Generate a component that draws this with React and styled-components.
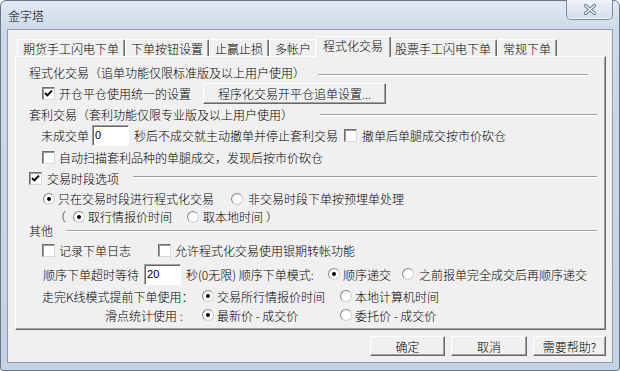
import React from 'react';
import styled, { createGlobalStyle } from 'styled-components';

const GlobalStyle = createGlobalStyle`
  html, body {
    margin: 0;
    padding: 0;
    overflow: hidden;
    background: #fff;
  }
  body {
    font-family: "Noto Sans CJK SC", "Liberation Sans", sans-serif;
    font-size: 12px;
    font-weight: 300;
    color: #000;
  }
  * {
    box-sizing: border-box;
  }
`

// ---------------- window frame ----------------

const Window = styled.div`
  width: 620px;
  height: 371px;
  display: flex;
  flex-direction: column;
  border: 1px solid #66778c;
  border-radius: 6px 6px 3px 3px;
  background: linear-gradient(#e2eaf4, #cdd9e8 28px, #c4d2e3);
  padding: 0 6px 7px;
`

const TitleBar = styled.div`
  height: 28px;
  display: flex;
  align-items: center;
  padding-left: 1px;
`

const Title = styled.span`
  font-size: 12px;
  color: #000;
`

const CloseButton = styled.div`
  margin-left: auto;
  align-self: flex-start;
  margin-top: -1px;
  width: 47px;
  height: 20px;
  display: flex;
  align-items: center;
  justify-content: center;
  border: 1px solid #7d8ba0;
  border-top: none;
  border-radius: 0 0 5px 5px;
  background: linear-gradient(#eef3f9, #d3ddea);
  box-shadow: inset 0 -1px 0 #f4f7fb;
`

const Client = styled.div`
  flex: 1;
  display: flex;
  flex-direction: column;
  border: 1px solid #8e9cb0;
  background: #f0f0f0;
  padding: 6px 6px 0 7px;
`

// ---------------- tabs ----------------

const TabStrip = styled.div`
  display: flex;
  align-items: flex-end;
  height: 20px;
  padding-left: 2px;
`

const Tab = styled.div`
  position: relative;
  z-index: ${p => (p.$active ? 2 : 1)};
  display: flex;
  align-items: center;
  height: ${p => (p.$active ? 21 : 17)}px;
  margin: 0 ${p => (p.$active ? -2 : 0)}px ${p => (p.$active ? -1 : 0)}px;
  padding: 0 ${p => (p.$active ? 7 : 5)}px ${p => (p.$active ? 4 : 0)}px;
  background: #f0f0f0;
  border-top: 1px solid #fff;
  border-left: 1px solid #fff;
  border-right: 1px solid #696969;
  border-radius: 2px 2px 0 0;
  box-shadow: inset -1px 0 0 #a0a0a0;
  white-space: nowrap;
`

const Panel = styled.div`
  height: 274px;
  display: flex;
  flex-direction: column;
  padding: 5px 0 0 13px;
  border: 1px solid;
  border-color: #fff #696969 #696969 #fff;
  box-shadow: inset -1px -1px 0 #a0a0a0;
`

// ---------------- rows and controls ----------------

const Row = styled.div`
  display: flex;
  align-items: center;
  height: ${p => p.$h}px;
  padding-left: ${p => p.$indent || 0}px;
  white-space: nowrap;
`

const Rule = styled.div`
  flex: 1;
  height: 2px;
  border-top: 1px solid #a0a0a0;
  border-bottom: 1px solid #fff;
  margin-left: ${p => p.$ml}px;
  margin-right: ${p => p.$mr}px;
  margin-top: ${p => (p.$dy > 0 ? p.$dy * 2 : 0)}px;
  margin-bottom: ${p => (p.$dy < 0 ? -p.$dy * 2 : 0)}px;
`

const Txt = styled.span`
  display: inline-block;
  flex: none;
  margin-left: ${p => p.$ml || 0}px;
  padding-left: ${p => p.$pl || 0}px;
  width: ${p => (p.$w ? `${p.$w}px` : 'auto')};
`

const Opt = styled.div`
  display: flex;
  align-items: center;
  flex: none;
  gap: ${p => p.$gap ?? 4}px;
  margin-left: ${p => p.$ml || 0}px;
  width: ${p => (p.$w ? `${p.$w}px` : 'auto')};
`

const CheckBox = styled.span`
  width: 13px;
  height: 13px;
  flex: none;
  display: flex;
  align-items: center;
  justify-content: center;
  background: #fff;
  border: 1px solid;
  border-color: #707070 #d8d8d8 #d8d8d8 #707070;
  box-shadow: inset 1px 1px 0 #9a9a9a;
`

const RadioCircle = styled.span`
  width: 12px;
  height: 12px;
  flex: none;
  display: flex;
  align-items: center;
  justify-content: center;
  border-radius: 50%;
  border: 1px solid;
  border-color: #8c8c8c #cfcfcf #cfcfcf #8c8c8c;
  background: radial-gradient(circle at 60% 60%, #fff 45%, #e2e2e2);

  &::after {
    content: '';
    display: ${p => (p.$on ? 'block' : 'none')};
    width: 4px;
    height: 4px;
    border-radius: 50%;
    background: #000;
  }
`

const Field = styled.div`
  width: ${p => p.$w}px;
  height: 21px;
  flex: none;
  margin-left: ${p => p.$ml || 0}px;
  padding-left: 2px;
  background: #fff;
  border: 1px solid;
  border-color: #a0a0a0 #fff #fff #a0a0a0;
  box-shadow: inset 1px 1px 0 #696969;
  font-family: "Liberation Sans", sans-serif;
  font-weight: 400;
  font-size: 11px;
  line-height: 18px;
`

const Button = styled.button`
  width: ${p => p.$w}px;
  height: ${p => p.$h || 20}px;
  flex: none;
  margin: 0 0 0 ${p => p.$ml || 0}px;
  padding: 0;
  font: inherit;
  color: #000;
  background: #f0f0f0;
  border: 1px solid;
  border-color: #fff #696969 #696969 #fff;
  box-shadow: inset -1px -1px 0 #a0a0a0;
  white-space: nowrap;
`

const Footer = styled.div`
  display: flex;
  justify-content: flex-end;
  gap: 6px;
  margin-top: 6px;
`

const Check = ({ on }) => (
  <CheckBox>
    {on && (
      <svg width="9" height="9" viewBox="0 0 9 9">
        <polyline points="1,4 3.3,6.4 8,1.6" fill="none" stroke="#000" strokeWidth="1.9" />
      </svg>
    )}
  </CheckBox>
)

const tabs = ['期货手工闪电下单', '下单按钮设置', '止赢止损', '多帐户', '程式化交易', '股票手工闪电下单', '常规下单']

const App = () => {
  return (
    <>
      <GlobalStyle />
      <Window>
        <TitleBar>
          <Title>金字塔</Title>
          <CloseButton>
            <svg width="12" height="11" viewBox="0 0 12 11">
              <path d="M1.5 1.5 L10.5 9.5 M10.5 1.5 L1.5 9.5" stroke="#6d7a8b" strokeWidth="3.4" strokeLinecap="round" />
              <path d="M1.5 1.5 L10.5 9.5 M10.5 1.5 L1.5 9.5" stroke="#f4f6f9" strokeWidth="1.5" strokeLinecap="round" />
            </svg>
          </CloseButton>
        </TitleBar>

        <Client>
          {/* tab headers */}
          <TabStrip>
            {tabs.map(t => (
              <Tab key={t} $active={t === '程式化交易'}>{t}</Tab>
            ))}
          </TabStrip>

          <Panel>
            <Row $h={20}>
              <Txt $w={276}>程式化交易（追单功能仅限标准版及以上用户使用）</Txt>
              <Rule $ml={13} $mr={17} $dy={3} />
            </Row>
            <Row $h={23} $indent={13}>
              <Opt>
                <Check on />
                开仓平仓使用统一的设置
              </Opt>
              <Button $w={183} $h={21} $ml={12}>程序化交易开平仓追单设置...</Button>
            </Row>

            <Row $h={19}>
              <Txt $w={264}>套利交易（套利功能仅限专业版及以上用户使用）</Txt>
              <Rule $ml={27} $mr={8} />
            </Row>
            <Row $h={22} $indent={12}>
              <Txt>未成交单</Txt>
              <Field $w={37} $ml={3}>0</Field>
              <Txt $ml={5}>秒后不成交就主动撤单并停止套利交易</Txt>
              <Opt $ml={6} $gap={5}>
                <Check />
                撤单后单腿成交按市价砍仓
              </Opt>
            </Row>
            <Row $h={22} $indent={13}>
              <Opt>
                <Check />
                自动扫描套利品种的单腿成交，发现后按市价砍仓
              </Opt>
            </Row>

            <Row $h={21}>
              <Opt $gap={5}>
                <Check on />
                交易时段选项
              </Opt>
              <Rule $ml={14} $mr={8} $dy={-1.5} />
            </Row>
            <Row $h={19} $indent={14}>
              <Opt $gap={3}>
                <RadioCircle $on />
                只在交易时段进行程式化交易
              </Opt>
              <Opt $ml={17} $gap={5}>
                <RadioCircle />
                非交易时段下单按预埋单处理
              </Opt>
            </Row>
            <Row $h={17} $indent={25}>
              <Txt>（</Txt>
              <Opt $ml={7} $gap={3}>
                <RadioCircle $on />
                取行情报价时间
              </Opt>
              <Opt $ml={15}>
                <RadioCircle />
                取本地时间
              </Opt>
              <Txt $ml={3}>）</Txt>
            </Row>

            <Row $h={11}>
              <Txt>其他</Txt>
              <Rule $ml={13} $mr={8} />
            </Row>
            <Row $h={28} $indent={13}>
              <Opt $w={116}>
                <Check />
                记录下单日志
              </Opt>
              <Opt>
                <Check />
                允许程式化交易使用银期转帐功能
              </Opt>
            </Row>
            <Row $h={20} $indent={14}>
              <Txt>顺序下单超时等待</Txt>
              <Field $w={37} $ml={5}>20</Field>
              <Txt $ml={5} $w={142}>秒(0无限) 顺序下单模式:</Txt>
              <Opt $w={74} $gap={3}>
                <RadioCircle $on />
                顺序递交
              </Opt>
              <Opt $gap={5}>
                <RadioCircle />
                之前报单完全成交后再顺序递交
              </Opt>
            </Row>
            <Row $h={24} $indent={13}>
              <Txt $w={160}>走完K线模式提前下单使用：</Txt>
              <Opt $w={138} $gap={3}>
                <RadioCircle $on />
                交易所行情报价时间
              </Opt>
              <Opt $gap={3}>
                <RadioCircle />
                本地计算机时间
              </Opt>
            </Row>
            <Row $h={14} $indent={13}>
              <Txt $w={160} $pl={63}>滑点统计使用 :</Txt>
              <Opt $w={138} $gap={3}>
                <RadioCircle $on />
                最新价 - 成交价
              </Opt>
              <Opt $gap={3}>
                <RadioCircle />
                委托价 - 成交价
              </Opt>
            </Row>
          </Panel>

          <Footer>
            <Button $w={75}>确定</Button>
            <Button $w={76}>取消</Button>
            <Button $w={73}>需要帮助?</Button>
          </Footer>
        </Client>
      </Window>
    </>
  );
};

export default App;
